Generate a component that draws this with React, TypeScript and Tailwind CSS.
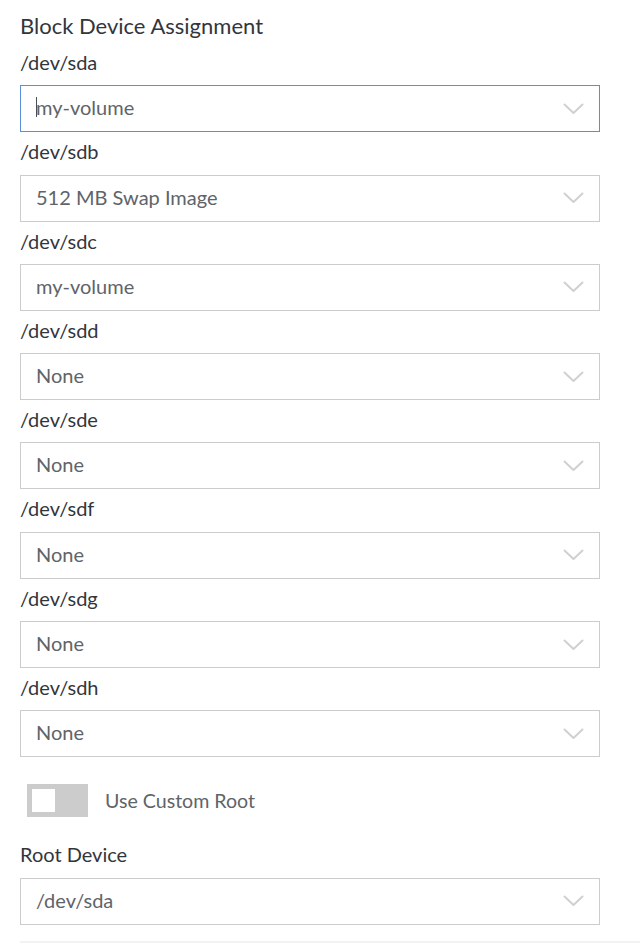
import React from "react";

const fields: [string, string][] = [
  ["/dev/sda", "my-volume"],
  ["/dev/sdb", "512 MB Swap Image"],
  ["/dev/sdc", "my-volume"],
  ["/dev/sdd", "None"],
  ["/dev/sde", "None"],
  ["/dev/sdf", "None"],
  ["/dev/sdg", "None"],
  ["/dev/sdh", "None"],
];

function Chevron() {
  return (
    <svg width="21" height="12" viewBox="0 0 21 12" fill="none" className="shrink-0">
      <path d="M1.5 1.5 L10.5 10 L19.5 1.5" stroke="#cfd0d1" strokeWidth="2" strokeLinecap="round" strokeLinejoin="round" />
    </svg>
  );
}

function Select({ value, focused }: { value: string; focused?: boolean }) {
  return (
    <div
      className={
        focused
          ? "relative w-[580px] h-[47px] border border-[#5a8fdb] flex items-center bg-white"
          : "relative w-[580px] h-[47px] border border-[#cccccc] flex items-center bg-white"
      }
    >
      <div className="flex-1 pl-[15px] pb-[3px] text-[20px] leading-[24px] text-[#606469] whitespace-nowrap">{value}</div>
      {focused && <div className="absolute left-[15px] top-[11px] w-px h-[20px] bg-[#4a4d52]" />}
      <div className="pr-[15px] flex items-center">
        <Chevron />
      </div>
    </div>
  );
}

export default function App() {
  return (
    <div className="w-[640px] h-[946px] bg-white pl-[20px] pt-[12px] relative" style={{ fontFamily: "Lato, 'Noto Sans', sans-serif" }}>
      <div className="text-[22px] leading-[28px] pb-[3px] text-[#32363c]">Block Device Assignment</div>
      {fields.map(([label, value], i) => (
        <div key={label}>
          <div className="text-[20px] leading-[23.3px] pt-[8px] pb-[11px] text-[#32363c]">{label}</div>
          <Select value={value} focused={i === 0} />
        </div>
      ))}
      <div className="flex items-center mt-[27px] ml-[7px] gap-[17px]">
        <div className="w-[61px] h-[33px] bg-[#cccccc] flex items-center pl-[5px]">
          <div className="w-[23px] h-[23px] bg-white" />
        </div>
        <span className="text-[19.6px] leading-[24px] text-[#606469]">Use Custom Root</span>
      </div>
      <div className="text-[20px] leading-[23.3px] pt-[26px] pb-[11px] text-[#32363c]">Root Device</div>
      <Select value="/dev/sda" />
      <div className="absolute left-[20px] right-0 top-[941px] h-[2px] bg-[#f2f2f2]" />
    </div>
  );
}
